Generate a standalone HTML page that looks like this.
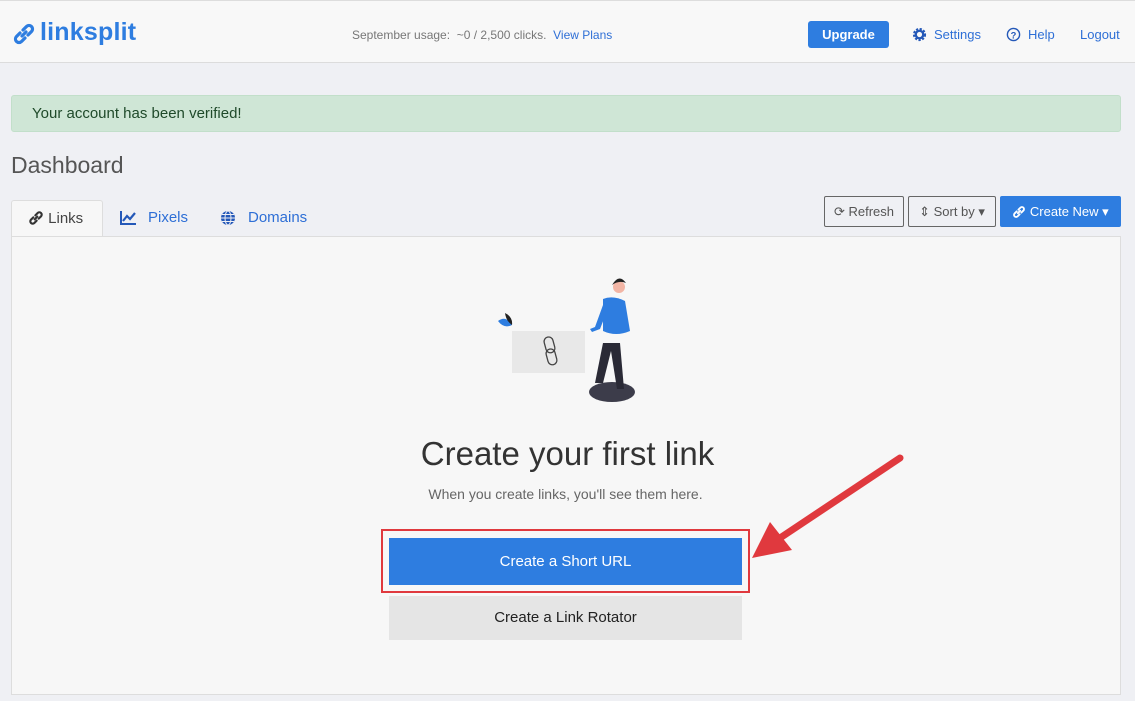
<!DOCTYPE html>
<html><head><meta charset="utf-8"><style>
*{box-sizing:border-box;margin:0;padding:0}
body{width:1135px;height:701px;overflow:hidden;background:#eff0f4;font-family:"Liberation Sans",sans-serif;position:relative;color:#333}
.hdr{position:absolute;left:0;top:0;width:1135px;height:63px;background:#f8f8f8;border-top:1px solid #ddd;border-bottom:1px solid #dcdcdc}
.abs{position:absolute}
.blue{color:#2e6fd6}
svg{vertical-align:middle}
</style></head><body>
<svg width="0" height="0" style="position:absolute"><defs><symbol id="lk" viewBox="0 0 24 24"><g fill="none" stroke="currentColor" stroke-width="3.2" stroke-linecap="round"><path d="M10 14 L14 10"/><path d="M8 11 L4.5 14.5 a3.5 3.5 0 0 0 5 5 L13 16"/><path d="M11 8 L14.5 4.5 a3.5 3.5 0 0 1 5 5 L16 13"/></g></symbol></defs></svg>
<div class="hdr">
 <svg class="abs" style="left:12px;top:21px;color:#2e7de0" width="24" height="24"><use href="#lk"/></svg>
 <div class="abs" style="left:40px;top:17px;font-size:25px;font-weight:bold;color:#2e7de0;letter-spacing:0.2px">linksplit</div>
 <div class="abs" style="left:352px;top:27px;font-size:12px;color:#777">September usage: &nbsp;~0 / 2,500 clicks. &nbsp;<span class="blue">View Plans</span></div>
 <div class="abs" style="left:808px;top:20px;width:81px;height:27px;background:#2e7de0;border-radius:3px;color:#fff;font-weight:bold;font-size:13px;text-align:center;line-height:27px">Upgrade</div>
 <svg class="abs" style="left:912px;top:26px" width="15" height="15" viewBox="0 0 16 16"><circle cx="8" cy="8" r="5.5" fill="none" stroke="#2458b8" stroke-width="3" stroke-dasharray="2.2 1.5"/><circle cx="8" cy="8" r="4" fill="none" stroke="#2458b8" stroke-width="2.5"/></svg>
 <div class="abs blue" style="left:934px;top:26px;font-size:13px">Settings</div>
 <svg class="abs" style="left:1006px;top:26px" width="15" height="15" viewBox="0 0 16 16"><circle cx="8" cy="8" r="6.5" fill="none" stroke="#2458b8" stroke-width="1.5"/><text x="8" y="12" font-size="10" font-weight="bold" text-anchor="middle" fill="#2458b8" font-family="Liberation Sans">?</text></svg>
 <div class="abs blue" style="left:1028px;top:26px;font-size:13px">Help</div>
 <div class="abs blue" style="left:1080px;top:26px;font-size:13px">Logout</div>
</div>
<div class="abs" style="left:11px;top:95px;width:1110px;height:37px;background:#cfe6d6;border:1px solid #c2dfca;border-radius:3px;color:#1f4a2a;font-size:15px;padding:9px 20px">Your account has been verified!</div>
<div class="abs" style="left:11px;top:152px;font-size:23px;color:#555">Dashboard</div>
<div class="abs" style="left:11px;top:200px;width:92px;height:37px;background:#f7f7f7;border:1px solid #ddd;border-bottom:none;border-radius:3px 3px 0 0;font-size:15px;padding:9px 0 0 16px;color:#444"><svg width="16" height="16" style="color:#333;margin-top:-3px"><use href="#lk"/></svg> Links</div>
<svg class="abs" style="left:120px;top:210px" width="17" height="15" viewBox="0 0 17 15"><path d="M1 1 V14 H16" fill="none" stroke="#2458b8" stroke-width="2"/><path d="M3 11 L7 6 L10 9 L15 3" fill="none" stroke="#2458b8" stroke-width="2.2"/></svg>
<div class="abs blue" style="left:148px;top:209px;font-size:15px">Pixels</div>
<svg class="abs" style="left:220px;top:210px" width="16" height="16" viewBox="0 0 16 16"><circle cx="8" cy="8" r="7" fill="#2458b8"/><g fill="none" stroke="#f0f0f4" stroke-width="1"><ellipse cx="8" cy="8" rx="3" ry="7"/><path d="M1 8 H15 M2 4.5 H14 M2 11.5 H14"/></g></svg>
<div class="abs blue" style="left:248px;top:209px;font-size:15px">Domains</div>
<div class="abs" style="left:824px;top:196px;width:80px;height:31px;border:1px solid #666;border-radius:2px;font-size:13px;color:#555;line-height:29px;text-align:center">⟳ Refresh</div>
<div class="abs" style="left:908px;top:196px;width:88px;height:31px;border:1px solid #666;border-radius:2px;font-size:13px;color:#555;line-height:29px;text-align:center">⇕ Sort by ▾</div>
<div class="abs" style="left:1000px;top:196px;width:121px;height:31px;background:#2e7de0;border-radius:2px;font-size:13px;color:#fff;line-height:31px;text-align:center"><svg width="14" height="14" style="color:#fff;margin-top:-2px"><use href="#lk"/></svg> Create New ▾</div>
<div class="abs" style="left:11px;top:236px;width:1110px;height:459px;background:#f7f7f7;border:1px solid #ddd"></div>
<svg class="abs" style="left:495px;top:275px" width="145" height="130" viewBox="0 0 145 130">
 <rect x="17" y="56" width="73" height="42" fill="#e8e8e8"/>
 <g fill="none" stroke="#444" stroke-width="1.3"><rect x="50" y="62" width="9" height="16" rx="4.5" transform="rotate(-15 54 70)"/><rect x="52" y="74" width="9" height="16" rx="4.5" transform="rotate(-15 56 82)"/></g>
 <path d="M3 46 q8 -6 14 4 q-8 4 -14 -4z" fill="#2e7de0"/><path d="M10 38 q8 4 7 12 q-6 -4 -7 -12z" fill="#222"/>
 <ellipse cx="117" cy="117" rx="23" ry="10" fill="#3c3c4a"/>
 <path d="M108 68 l-8 40 h8 l8 -32 l6 38 h7 l-4 -46z" fill="#2a2a36"/>
 <path d="M108 24 q10 -4 22 2 l5 30 q-14 6 -27 0z" fill="#2e7de0"/>
 <path d="M108 30 l-8 22 l-5 2 l2 3 l8 -3 l7 -18z" fill="#2e7de0"/>
 <circle cx="124" cy="12" r="6" fill="#f2b5a5"/><path d="M117 10 q7 -12 14 -2 q-7 -3 -14 2z" fill="#222"/>
</svg>
<div class="abs" style="left:0;width:1135px;top:435px;text-align:center;font-size:33px;color:#333">Create your first link</div>
<div class="abs" style="left:0;width:1131px;top:486px;text-align:center;font-size:14px;color:#666">When you create links, you'll see them here.</div>
<div class="abs" style="left:381px;top:529px;width:369px;height:64px;border:2px solid #e0393e"></div>
<div class="abs" style="left:389px;top:538px;width:353px;height:47px;background:#2e7de0;color:#fff;font-size:15px;text-align:center;line-height:47px">Create a Short URL</div>
<div class="abs" style="left:389px;top:596px;width:353px;height:44px;background:#e5e5e5;color:#222;font-size:15px;text-align:center;line-height:44px">Create a Link Rotator</div>
<svg class="abs" style="left:740px;top:450px" width="170" height="120" viewBox="0 0 170 120"><path d="M160 8 L40 88" stroke="#e0393e" stroke-width="7" stroke-linecap="round"/><path d="M12 108 L30 72 L52 100z" fill="#e0393e"/></svg>
</body></html>
